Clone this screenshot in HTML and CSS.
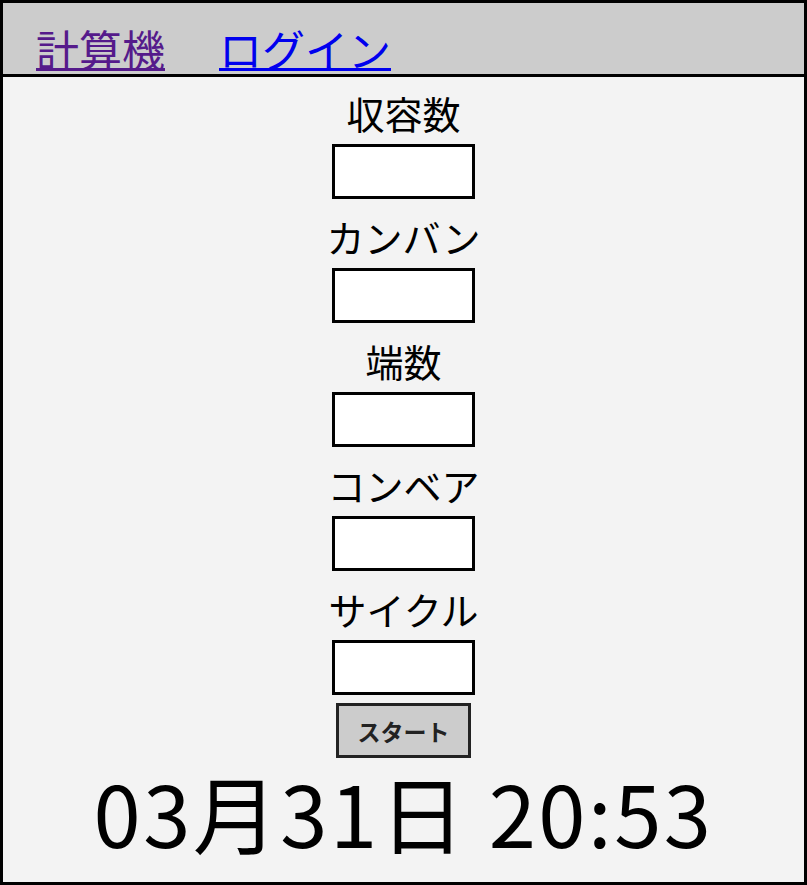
FILE: index.html
```html
<!DOCTYPE html>
<html lang="ja">
<head>
<meta charset="utf-8">
<title>計算機</title>
<link rel="stylesheet" href="styles.css">
</head>
<body>
<div class="frame">
  <header class="nav">
    <a class="nav-link visited" href="#calc">計算機</a>
    <a class="nav-link" href="#login">ログイン</a>
  </header>
  <main class="main">
    <div class="field">
      <label class="field-label">収容数</label>
      <input class="field-input" type="text">
    </div>
    <div class="field">
      <label class="field-label">カンバン</label>
      <input class="field-input" type="text">
    </div>
    <div class="field">
      <label class="field-label">端数</label>
      <input class="field-input" type="text">
    </div>
    <div class="field">
      <label class="field-label">コンベア</label>
      <input class="field-input" type="text">
    </div>
    <div class="field field-last">
      <label class="field-label">サイクル</label>
      <input class="field-input" type="text">
    </div>
    <button class="start-btn" type="button">スタート</button>
    <div class="clock">03月31日 20:53</div>
  </main>
</div>
</body>
</html>
```
FILE: styles.css
```css
* { box-sizing: border-box; }
html, body {
  margin: 0;
  padding: 0;
  background: #f3f3f3;
}
body {
  font-family: "Noto Sans CJK JP", "Noto Sans", sans-serif;
  color: #000;
}
.frame {
  width: 807px;
  height: 885px;
  border: 3px solid #000;
  background: #f3f3f3;
  display: flex;
  flex-direction: column;
  overflow: hidden;
}
.nav {
  background: #cccccc;
  border-bottom: 3px solid #000;
  height: 74px;
  padding: 19px 0 0 33px;
  display: flex;
  gap: 54px;
  font-size: 43px;
  line-height: 52px;
}
.nav-link {
  color: #0000ee;
  text-decoration: underline;
  text-decoration-thickness: 3px;
  text-underline-offset: 1px;
}
.nav-link.visited {
  color: #551a8b;
}
.main {
  display: flex;
  flex-direction: column;
  align-items: center;
  padding-top: 13px;
}
.field {
  display: flex;
  flex-direction: column;
  align-items: center;
  margin-bottom: 15px;
}
.field.field-last {
  margin-bottom: 8px;
}
.field-label {
  font-size: 38px;
  line-height: 46px;
  margin-bottom: 8px;
}
.field-input {
  width: 143px;
  height: 55px;
  border: 3px solid #000;
  background: #fff;
  margin: 0;
  padding: 0 6px;
  font-size: 24px;
  outline: none;
}
.start-btn {
  width: 135px;
  height: 55px;
  border: 3px solid #222;
  background: #cccccc;
  font-family: "Noto Sans CJK JP", sans-serif;
  font-weight: 700;
  font-size: 23px;
  color: #222;
  padding: 0;
  margin: 0;
}
.clock {
  font-size: 85px;
  line-height: 85px;
  margin-top: 10px;
  letter-spacing: 2.5px;
  white-space: nowrap;
}
```
